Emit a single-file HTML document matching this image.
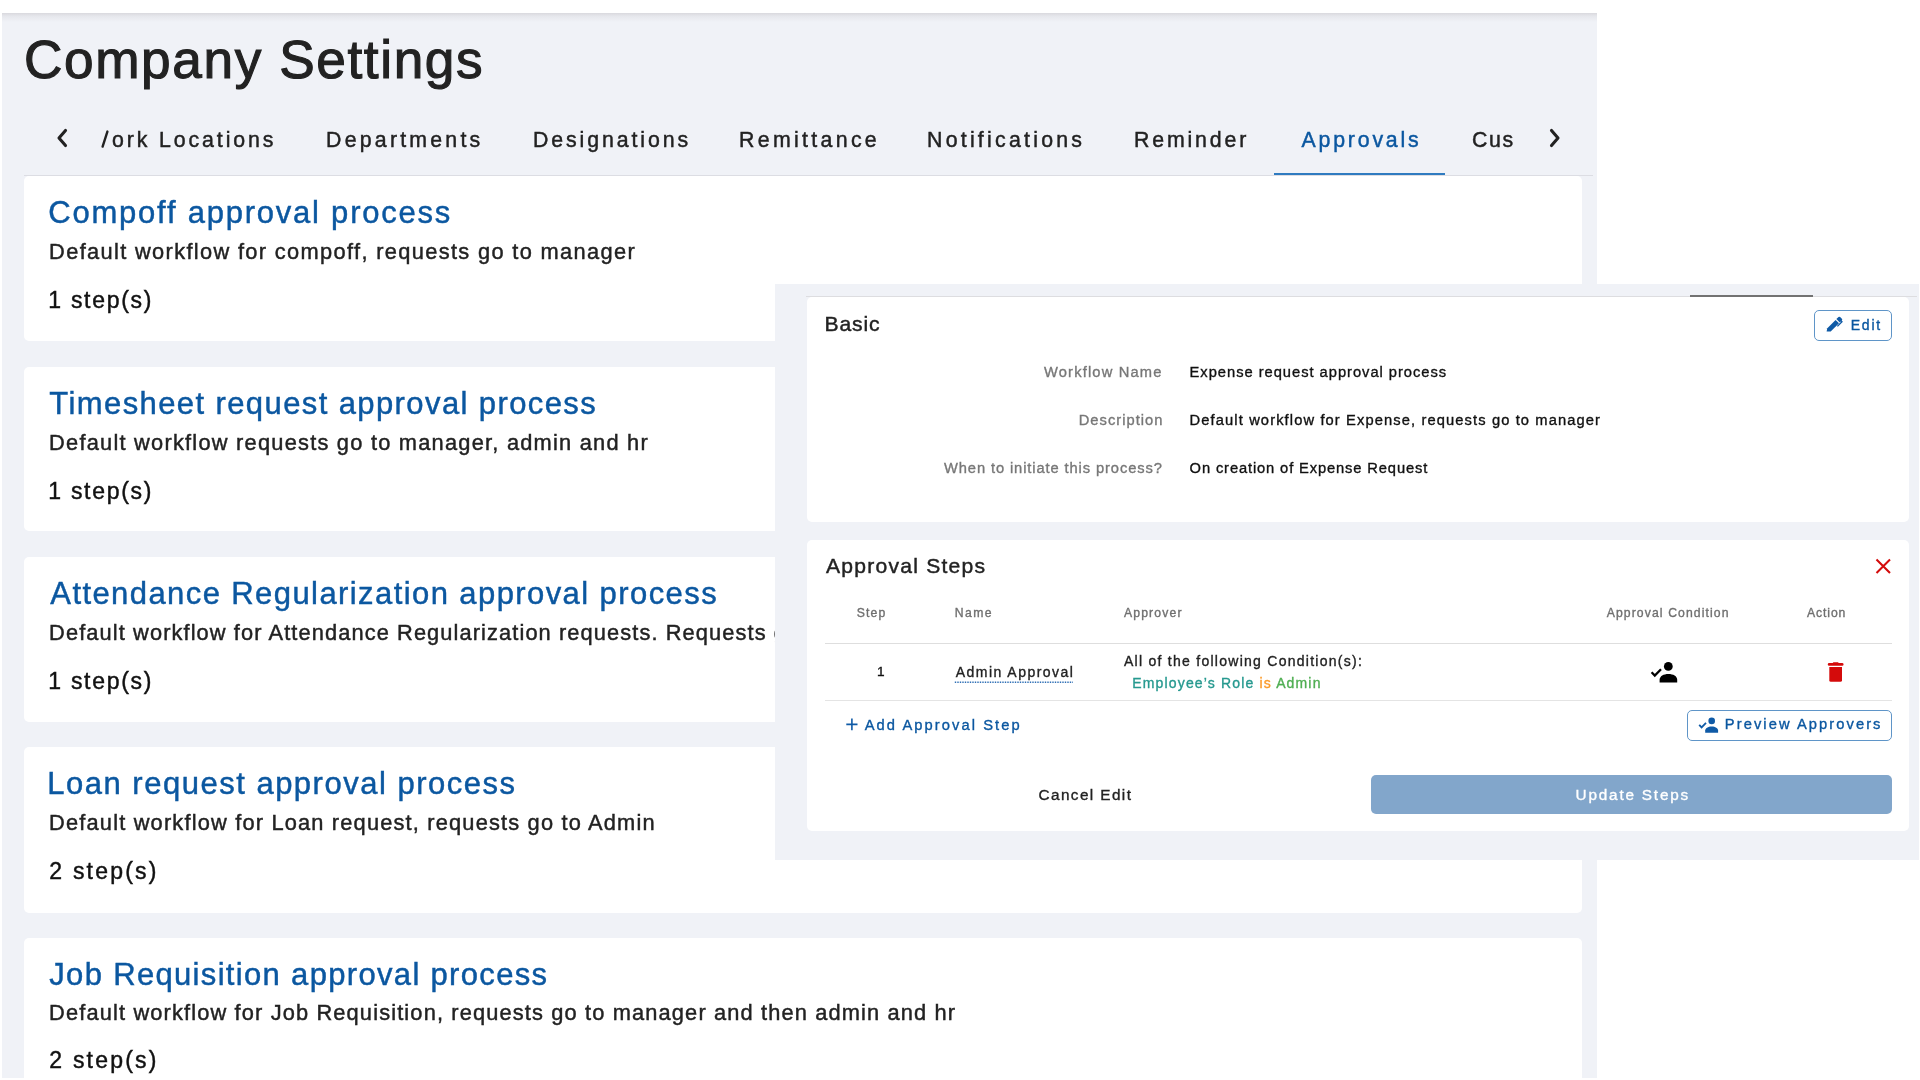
<!DOCTYPE html>
<html><head><meta charset="utf-8">
<style>
*{margin:0;padding:0;box-sizing:border-box}
html,body{width:1920px;height:1080px;overflow:hidden;background:#ffffff;font-family:"Liberation Sans",sans-serif}
.a{position:absolute}
.t{position:absolute;white-space:pre;font-family:"Liberation Sans",sans-serif;-webkit-text-stroke-width:0.45px}
.clip{position:absolute;overflow:hidden}
.card{position:absolute;background:#fff;border-radius:5px}
</style></head><body><div style="position:absolute;left:0;top:0;width:1920px;height:1080px;overflow:hidden;will-change:transform">
<!-- left screenshot -->
<div class="a" style="left:2px;top:13px;width:1595px;height:1065px;background:#f0f2f7;overflow:hidden">
  <div class="a" style="left:0;top:0;width:1595px;height:9px;background:linear-gradient(#d9d9de,#e6e7ec 35%,#f0f2f7)"></div>
</div>
<!-- tab bar border -->
<div class="a" style="left:24px;top:175px;width:1569px;height:1px;background:#dcdde3"></div>
<!-- active tab indicator -->
<div class="a" style="left:1274px;top:173px;width:171px;height:2px;background:#2f7bc0"></div>
<!-- cards -->
<div class="card" style="left:24px;top:176px;width:1558px;height:165px"></div>
<div class="card" style="left:24px;top:367px;width:1558px;height:164px"></div>
<div class="card" style="left:24px;top:557px;width:1558px;height:165px"></div>
<div class="card" style="left:24px;top:747px;width:1558px;height:166px"></div>
<div class="card" style="left:24px;top:938px;width:1558px;height:160px"></div>
<!-- chevrons -->
<svg class="a" style="left:54px;top:127px" width="18" height="22" viewBox="0 0 18 22"><path d="M11.5 3.5 L5 11 L11.5 18.5" fill="none" stroke="#222" stroke-width="3.1" stroke-linecap="round" stroke-linejoin="round"/></svg>
<svg class="a" style="left:1545.5px;top:127px" width="18" height="22" viewBox="0 0 18 22"><path d="M5.5 3.5 L12 11 L5.5 18.5" fill="none" stroke="#222" stroke-width="3.1" stroke-linecap="round" stroke-linejoin="round"/></svg>
<div class="t" style="left:24.00px;top:32.78px;font-size:53.2px;line-height:53.2px;color:#222222;letter-spacing:1.600px;-webkit-text-stroke-width:1.1px;">Company Settings</div>
<div class="t" style="left:326.10px;top:129.80px;font-size:21.3px;line-height:21.3px;color:#222222;letter-spacing:3.220px;">Departments</div>
<div class="t" style="left:533.00px;top:129.80px;font-size:21.3px;line-height:21.3px;color:#222222;letter-spacing:2.909px;">Designations</div>
<div class="t" style="left:739.00px;top:129.80px;font-size:21.3px;line-height:21.3px;color:#222222;letter-spacing:3.333px;">Remittance</div>
<div class="t" style="left:927.00px;top:129.80px;font-size:21.3px;line-height:21.3px;color:#222222;letter-spacing:3.250px;">Notifications</div>
<div class="t" style="left:1134.00px;top:129.80px;font-size:21.3px;line-height:21.3px;color:#222222;letter-spacing:2.857px;">Reminder</div>
<div class="t" style="left:1301.50px;top:129.80px;font-size:21.3px;line-height:21.3px;color:#0b57a0;letter-spacing:2.812px;">Approvals</div>
<div class="clip" style="left:110.5px;top:129.80px;width:169.5px;height:27.7px"><div class="t" style="left:-21.20px;top:0px;font-size:21.3px;line-height:21.3px;color:#222222;letter-spacing:2.900px;">Work Locations</div></div>
<div class="clip" style="left:1470px;top:129.80px;width:44px;height:27.7px"><div class="t" style="left:2.00px;top:0px;font-size:21.3px;line-height:21.3px;color:#222222;letter-spacing:1.600px;">Custom</div></div>
<div class="t" style="left:48.30px;top:197.45px;font-size:31px;line-height:31px;color:#0b57a0;letter-spacing:1.770px;">Compoff approval process</div>
<div class="t" style="left:49.10px;top:241.47px;font-size:21.8px;line-height:21.8px;color:#222222;letter-spacing:1.347px;">Default workflow for compoff, requests go to manager</div>
<div class="t" style="left:48.30px;top:289.25px;font-size:23px;line-height:23px;color:#111;letter-spacing:1.713px;">1 step(s)</div>
<div class="t" style="left:49.30px;top:388.15px;font-size:31px;line-height:31px;color:#0b57a0;letter-spacing:1.400px;">Timesheet request approval process</div>
<div class="t" style="left:49.10px;top:432.17px;font-size:21.8px;line-height:21.8px;color:#222222;letter-spacing:1.237px;">Default workflow requests go to manager, admin and hr</div>
<div class="t" style="left:48.30px;top:479.95px;font-size:23px;line-height:23px;color:#111;letter-spacing:1.713px;">1 step(s)</div>
<div class="t" style="left:50.30px;top:578.15px;font-size:31px;line-height:31px;color:#0b57a0;letter-spacing:1.415px;">Attendance Regularization approval process</div>
<div class="t" style="left:49.10px;top:622.17px;font-size:21.8px;line-height:21.8px;color:#222222;letter-spacing:1.105px;">Default workflow for Attendance Regularization requests. Requests go to manager</div>
<div class="t" style="left:48.30px;top:669.95px;font-size:23px;line-height:23px;color:#111;letter-spacing:1.713px;">1 step(s)</div>
<div class="t" style="left:47.30px;top:768.45px;font-size:31px;line-height:31px;color:#0b57a0;letter-spacing:1.500px;">Loan request approval process</div>
<div class="t" style="left:49.10px;top:812.47px;font-size:21.8px;line-height:21.8px;color:#222222;letter-spacing:1.183px;">Default workflow for Loan request, requests go to Admin</div>
<div class="t" style="left:49.30px;top:860.25px;font-size:23px;line-height:23px;color:#111;letter-spacing:2.213px;">2 step(s)</div>
<div class="t" style="left:49.30px;top:958.95px;font-size:31px;line-height:31px;color:#0b57a0;letter-spacing:1.326px;">Job Requisition approval process</div>
<div class="t" style="left:49.10px;top:1001.67px;font-size:21.8px;line-height:21.8px;color:#222222;letter-spacing:1.148px;">Default workflow for Job Requisition, requests go to manager and then admin and hr</div>
<div class="t" style="left:49.30px;top:1049.45px;font-size:23px;line-height:23px;color:#111;letter-spacing:2.213px;">2 step(s)</div>
<svg class="a" style="left:0;top:0" width="200" height="200"><path d="M102.6 146.6 L107.4 131.6" stroke="#222" stroke-width="2.4" stroke-linecap="round"/></svg>
<!-- overlay -->
<div class="a" style="left:775px;top:284px;width:1144px;height:576px;background:#f0f2f7"></div>
<div class="a" style="left:806px;top:296px;width:1111px;height:1px;background:#dddde0"></div>
<div class="a" style="left:1690px;top:295px;width:123px;height:2px;background:#727272"></div>
<div class="card" style="left:807px;top:297px;width:1102px;height:225px"></div>
<div class="card" style="left:807px;top:540px;width:1102px;height:291px"></div>
<!-- edit button -->
<div class="a" style="left:1814px;top:310px;width:78px;height:31px;border:1.5px solid #5f95c8;border-radius:5px"></div>
<!-- lines -->
<div class="a" style="left:825px;top:643px;width:1067px;height:1px;background:#dedede"></div>
<div class="a" style="left:825px;top:700px;width:1067px;height:1px;background:#e4e4e4"></div>
<!-- preview button -->
<div class="a" style="left:1687px;top:710px;width:205px;height:31px;border:1.5px solid #5f95c8;border-radius:5px"></div>
<!-- update button -->
<div class="a" style="left:1371px;top:775px;width:521px;height:39px;background:#82a6cb;border-radius:5px"></div>
<div class="t" style="left:824.60px;top:312.56px;font-size:21.1px;line-height:21.1px;color:#222222;letter-spacing:0.850px;">Basic</div>
<div class="t" style="left:1044.00px;top:364.90px;font-size:14.7px;line-height:14.7px;color:#777777;letter-spacing:1.167px;-webkit-text-stroke-width:0.35px;">Workflow Name</div>
<div class="t" style="left:1078.70px;top:413.20px;font-size:14.7px;line-height:14.7px;color:#777777;letter-spacing:1.030px;-webkit-text-stroke-width:0.35px;">Description</div>
<div class="t" style="left:943.99px;top:460.50px;font-size:14.7px;line-height:14.7px;color:#777777;letter-spacing:0.897px;-webkit-text-stroke-width:0.35px;">When to initiate this process?</div>
<div class="t" style="left:1189.60px;top:365.20px;font-size:14.7px;line-height:14.7px;color:#111;letter-spacing:0.981px;-webkit-text-stroke-width:0.35px;">Expense request approval process</div>
<div class="t" style="left:1189.60px;top:412.81px;font-size:14.7px;line-height:14.7px;color:#111;letter-spacing:1.116px;-webkit-text-stroke-width:0.35px;">Default workflow for Expense, requests go to manager</div>
<div class="t" style="left:1189.60px;top:460.70px;font-size:14.7px;line-height:14.7px;color:#111;letter-spacing:0.876px;-webkit-text-stroke-width:0.35px;">On creation of Expense Request</div>
<div class="t" style="left:1850.80px;top:318.10px;font-size:14px;line-height:14px;color:#0b57a0;letter-spacing:1.733px;-webkit-text-stroke-width:0.35px;">Edit</div>
<div class="t" style="left:826.00px;top:554.77px;font-size:21.1px;line-height:21.1px;color:#222222;letter-spacing:1.231px;">Approval Steps</div>
<div class="t" style="left:856.70px;top:607.33px;font-size:12.2px;line-height:12.2px;color:#6f6f6f;letter-spacing:1.200px;-webkit-text-stroke-width:0.35px;">Step</div>
<div class="t" style="left:954.80px;top:607.33px;font-size:12.2px;line-height:12.2px;color:#6f6f6f;letter-spacing:1.433px;-webkit-text-stroke-width:0.35px;">Name</div>
<div class="t" style="left:1124.00px;top:607.33px;font-size:12.2px;line-height:12.2px;color:#6f6f6f;letter-spacing:1.143px;-webkit-text-stroke-width:0.35px;">Approver</div>
<div class="t" style="left:1606.70px;top:607.33px;font-size:12.2px;line-height:12.2px;color:#6f6f6f;letter-spacing:1.106px;-webkit-text-stroke-width:0.35px;">Approval Condition</div>
<div class="t" style="left:1807.00px;top:607.33px;font-size:12.2px;line-height:12.2px;color:#6f6f6f;letter-spacing:0.900px;-webkit-text-stroke-width:0.35px;">Action</div>
<div class="t" style="left:877.00px;top:665.24px;font-size:13.6px;line-height:13.6px;color:#111;letter-spacing:0.000px;-webkit-text-stroke-width:0.35px;">1</div>
<div class="t" style="left:955.80px;top:664.90px;font-size:14px;line-height:14px;color:#222;letter-spacing:1.462px;-webkit-text-stroke-width:0.35px;">Admin Approval</div>
<div class="t" style="left:1124.00px;top:653.50px;font-size:14px;line-height:14px;color:#222;letter-spacing:1.264px;-webkit-text-stroke-width:0.35px;">All of the following Condition(s):</div>
<div class="t" style="left:1132.30px;top:676.40px;font-size:14px;line-height:14px;color:#26998f;letter-spacing:1.152px;-webkit-text-stroke-width:0.35px;">Employee’s Role <span style="color:#fb9b2b">is</span> <span style="color:#4fae52">Admin</span></div>
<div class="t" style="left:864.75px;top:717.61px;font-size:14.7px;line-height:14.7px;color:#0b57a0;letter-spacing:2.078px;-webkit-text-stroke-width:0.35px;">Add Approval Step</div>
<div class="t" style="left:1724.80px;top:717.21px;font-size:14.7px;line-height:14.7px;color:#0b57a0;letter-spacing:2.075px;-webkit-text-stroke-width:0.35px;">Preview Approvers</div>
<div class="t" style="left:1038.50px;top:787.30px;font-size:15.3px;line-height:15.3px;color:#222;letter-spacing:1.420px;-webkit-text-stroke-width:0.35px;">Cancel Edit</div>
<div class="t" style="left:1575.60px;top:787.30px;font-size:15.3px;line-height:15.3px;color:#ffffff;letter-spacing:1.809px;-webkit-text-stroke-width:0.35px;">Update Steps</div>
<svg class="a" style="left:0;top:0" width="1920" height="1080" viewBox="0 0 1920 1080">
  <!-- pen icon in Edit -->
  <g fill="#0f5aa6">
    <path d="M1826.6 331.6 L1827.3 328.2 L1835.6 319.9 L1839.0 323.3 L1830.7 331.6 Z"/>
    <path d="M1836.4 319.1 L1838.5 317.0 Q1839.3 316.3 1840.1 317.0 L1841.9 318.8 Q1842.6 319.6 1841.9 320.4 L1839.8 322.5 Z"/>
  </g>
  <path d="M1841.2 321.0 L1842.0 321.8 L1837.4 326.4" fill="none" stroke="#0f5aa6" stroke-width="1.3"/>
  <!-- person check in table -->
  <g fill="#000">
    <circle cx="1668.3" cy="666.4" r="4.4"/>
    <path d="M1659.6 682.4 V679.8 C1659.6 676.0 1663.6 673.9 1668.4 673.9 C1673.2 673.9 1677.2 676.0 1677.2 679.8 V682.4 Z"/>
  </g>
  <polyline points="1651.6,672.2 1654.8,675.5 1661.0,669.2" fill="none" stroke="#000" stroke-width="2.3"/>
  <!-- trash -->
  <g fill="#d40b0b">
    <rect x="1827.8" y="662.9" width="15.7" height="2.8" rx="1.3"/>
    <rect x="1832.8" y="662.2" width="5.8" height="2" rx="0.8"/>
    <path d="M1829.3 667 H1842.0 V680.2 Q1842.0 681.8 1840.4 681.8 H1830.9 Q1829.3 681.8 1829.3 680.2 Z"/>
  </g>
  <!-- person check preview -->
  <g fill="#0f5aa6">
    <circle cx="1711.7" cy="720.9" r="3.3"/>
    <path d="M1705.2 732.8 V730.6 C1705.2 728.0 1708.0 726.4 1711.65 726.4 C1715.3 726.4 1718.1 728.0 1718.1 730.6 V732.8 Z"/>
  </g>
  <polyline points="1699.2,724.8 1701.6,727.4 1706.0,722.9" fill="none" stroke="#0f5aa6" stroke-width="1.8"/>
  <!-- plus -->
  <path d="M846.3 724.4 H857.5 M851.9 718.5 V730.2" stroke="#0f5aa6" stroke-width="1.6"/>
  <!-- close X -->
  <path d="M1876.5 559.5 L1890 573 M1890 559.5 L1876.5 573" stroke="#d40b0b" stroke-width="2.1"/>
  <!-- dotted underline -->
  <line x1="954.8" y1="682.2" x2="1073" y2="682.2" stroke="#2f6fb5" stroke-width="1.4" stroke-dasharray="1.4 1.1"/>
</svg>

</div></body></html>
